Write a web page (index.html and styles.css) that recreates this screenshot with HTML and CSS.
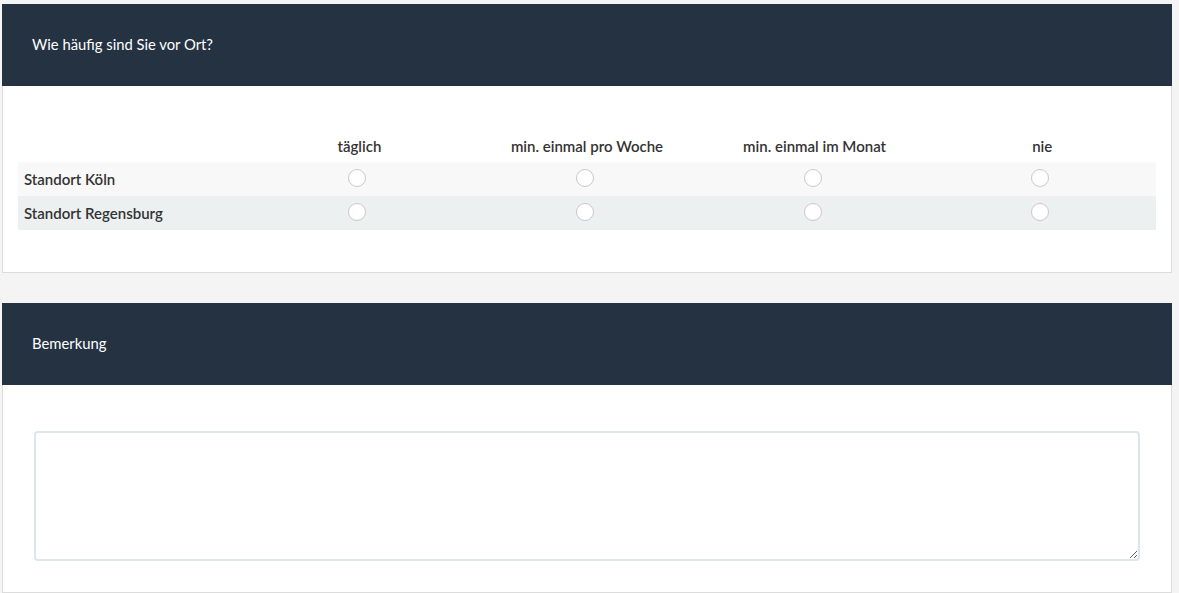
FILE: index.html
```html
<!DOCTYPE html>
<html lang="de">
<head>
<meta charset="utf-8">
<title>Umfrage</title>
<link rel="stylesheet" href="styles.css">
</head>
<body>
<div class="page">
  <section class="panel">
    <header class="panel-head">Wie häufig sind Sie vor Ort?</header>
    <div class="panel-body matrix-body">
      <table class="matrix">
        <thead>
          <tr>
            <th></th>
            <th>täglich</th>
            <th>min. einmal pro Woche</th>
            <th>min. einmal im Monat</th>
            <th>nie</th>
          </tr>
        </thead>
        <tbody>
          <tr class="row-odd">
            <td class="label">Standort Köln</td>
            <td><input type="radio" name="koeln"></td>
            <td><input type="radio" name="koeln"></td>
            <td><input type="radio" name="koeln"></td>
            <td><input type="radio" name="koeln"></td>
          </tr>
          <tr class="row-even">
            <td class="label">Standort Regensburg</td>
            <td><input type="radio" name="regensburg"></td>
            <td><input type="radio" name="regensburg"></td>
            <td><input type="radio" name="regensburg"></td>
            <td><input type="radio" name="regensburg"></td>
          </tr>
        </tbody>
      </table>
    </div>
  </section>

  <section class="panel">
    <header class="panel-head">Bemerkung</header>
    <div class="panel-body note-body">
      <textarea class="note"></textarea>
    </div>
  </section>
</div>
</body>
</html>
```

FILE: styles.css
```css
html, body {
  margin: 0;
  padding: 0;
  background: #f4f4f4;
}

body {
  font-family: Lato, "Liberation Sans", sans-serif;
  color: #333;
}

.page {
  width: 1170px;
  padding: 4px 0 0 2px;
  display: flex;
  flex-direction: column;
  gap: 30px;
}

.panel {
  background: #fff;
}

.panel-head {
  box-sizing: border-box;
  background: #253242;
  color: #fff;
  height: 82px;
  display: flex;
  align-items: center;
  padding: 0 0 1px 30px;
  font-size: 14.8px;
  line-height: 1;
}

.panel-body {
  border: 1px solid #dcdcdc;
  border-top: none;
}

.matrix-body {
  padding: 45px 15px 42px 15px;
}

.matrix {
  width: 100%;
  border-collapse: collapse;
  table-layout: fixed;
  font-size: 15px;
  line-height: 18px;
}

.matrix th {
  box-sizing: border-box;
  height: 31px;
  font-weight: 600;
  text-align: center;
  vertical-align: middle;
  color: #333;
  padding: 0 0 2px 0;
}

.matrix td {
  box-sizing: border-box;
  height: 34px;
  text-align: center;
  vertical-align: middle;
  padding: 0;
}

.matrix td.label {
  text-align: left;
  padding: 0 0 0 6px;
  font-weight: 600;
  color: #333;
}

.row-odd { background: #f8f8f8; }
.row-even { background: #ecf0f1; }

.matrix input[type="radio"] {
  appearance: none;
  -webkit-appearance: none;
  display: block;
  width: 18px;
  height: 18px;
  margin: -2px auto 0 auto;
  position: relative;
  left: -2px;
  border: 1px solid #c9c9c9;
  border-radius: 50%;
  background: #fff;
}

.note-body {
  padding: 46px 31px 31px 31px;
}

.note {
  display: block;
  box-sizing: border-box;
  width: 100%;
  height: 130px;
  border: 2px solid #dde5ee;
  border-radius: 4px;
  background: #fff;
  margin: 0;
  font-family: inherit;
}
```
